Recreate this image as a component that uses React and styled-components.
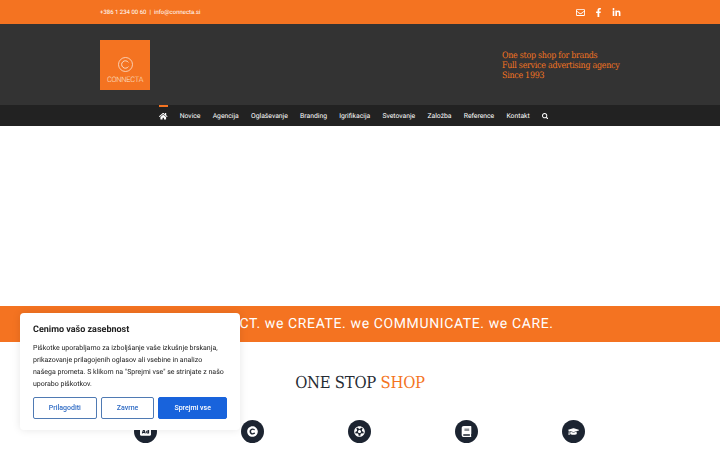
import React from "react";
import styled, { createGlobalStyle } from "styled-components";
import {
  FaHome,
  FaSearch,
  FaFacebookF,
  FaLinkedinIn,
  FaRegEnvelope,
  FaAd,
  FaCopyright,
  FaFutbol,
  FaBook,
  FaGraduationCap,
} from "react-icons/fa";

const GlobalStyle = createGlobalStyle`
  html, body {
    margin: 0;
    padding: 0;
    height: 450px;
    overflow: hidden;
    background: #fff;
    font-family: Roboto, "Liberation Sans", sans-serif;
    text-rendering: geometricPrecision;
  }
`;

const orange = "#f47321";
const slab = `"DejaVu Serif", "Liberation Serif", serif`;

const TopBar = styled.div`
  height: 24px;
  background: ${orange};
  display: flex;
  align-items: center;
  justify-content: space-between;
  padding: 0 95px 0 100px;
  color: #fff;
  font-size: 6px;
`;

const Contact = styled.div`
  display: flex;
  gap: 3px;
`;

const Social = styled.div`
  display: flex;
  align-items: center;
  color: #fff;
`;

const SocialLink = styled.span`
  width: 18px;
  display: flex;
  justify-content: center;
  font-size: 9px;
`;

const Header = styled.header`
  height: 81px;
  background: #333;
  display: flex;
  align-items: center;
  justify-content: space-between;
  padding: 0 100px;
  box-sizing: border-box;
`;

const Logo = styled.div`
  width: 50px;
  height: 50px;
  background: ${orange};
  display: flex;
  flex-direction: column;
  align-items: center;
  padding-top: 17px;
  box-sizing: border-box;
  color: #fbe3d2;
`;

const LogoName = styled.span`
  font-size: 7.5px;
  letter-spacing: -0.3px;
  line-height: 9px;
  margin-top: 3px;
  font-weight: 300;
`;

const Tagline = styled.div`
  width: 118px;
  padding-top: 2px;
  color: ${orange};
  font-family: ${slab};
  font-stretch: condensed;
  font-size: 8.8px;
  letter-spacing: -0.26px;
  line-height: 10px;
  white-space: nowrap;
`;

const Nav = styled.nav`
  height: 21px;
  background: #222;
  display: flex;
  align-items: center;
  padding-left: 159px;
  gap: 12.2px;
  color: #fff;
  font-size: 6.8px;
`;

const NavItem = styled.span`
  height: 100%;
  display: flex;
  align-items: center;
  box-sizing: border-box;
  font-size: ${(props) => props.size || "inherit"};
  border-top: 2px solid ${(props) => (props.active ? orange : "transparent")};
  padding-bottom: 1px;
`;

const Hero = styled.div`
  height: 180px;
  background: #fff;
`;

const Banner = styled.div`
  height: 36px;
  background: ${orange};
  color: #fff;
  display: flex;
  align-items: center;
  justify-content: center;
  font-size: 14px;
  letter-spacing: 0.62px;
`;

const Heading = styled.h2`
  margin: 0;
  padding-top: 30px;
  height: 48px;
  text-align: center;
  font-family: ${slab};
  font-stretch: condensed;
  font-weight: 400;
  font-size: 16.5px;
  letter-spacing: -0.25px;
  line-height: 22px;
  color: #262b33;
`;

const Accent = styled.span`
  color: ${orange};
`;

const Services = styled.div`
  display: grid;
  grid-template-columns: repeat(5, 107px);
  justify-content: center;
  justify-items: center;
  padding-right: 1px;
`;

const ServiceIcon = styled.div`
  width: 23px;
  height: 23px;
  border-radius: 50%;
  background: #1c2431;
  color: #fff;
  display: flex;
  align-items: center;
  justify-content: center;
  font-size: 11px;
`;

const CookieDialog = styled.div`
  position: fixed;
  left: 20px;
  top: 313px;
  width: 220px;
  height: 117px;
  box-sizing: border-box;
  padding: 11px 13px;
  background: #fff;
  border-radius: 4px;
  box-shadow: 0 0 8px rgba(0, 0, 0, 0.1);
`;

const CookieTitle = styled.div`
  font-size: 9px;
  font-weight: 700;
  line-height: 12px;
  color: #212121;
  margin-bottom: 6px;
`;

const CookieText = styled.p`
  margin: 0 0 7px;
  max-width: 192px;
  font-size: 7px;
  line-height: 12px;
  color: #212121;
`;

const CookieActions = styled.div`
  display: flex;
  gap: 4px;
`;

const CookieButton = styled.button`
  width: ${(props) => props.width}px;
  height: 22px;
  padding: 0;
  border-radius: 2px;
  box-sizing: border-box;
  border: 1.5px solid ${(props) => (props.primary ? "#1863dc" : "#4f7ab3")};
  background: ${(props) => (props.primary ? "#1863dc" : "#fff")};
  color: ${(props) => (props.primary ? "#fff" : "#2f6bc4")};
  font-family: inherit;
  font-size: 7px;
  font-weight: 500;
`;

const navLabels = [
  "Novice",
  "Agencija",
  "Oglaševanje",
  "Branding",
  "Igrifikacija",
  "Svetovanje",
  "Založba",
  "Reference",
  "Kontakt",
];

const services = [FaAd, FaCopyright, FaFutbol, FaBook, FaGraduationCap];

function LogoMark() {
  return (
    <svg width="15" height="15" viewBox="0 0 15 15" fill="none" stroke="currentColor">
      <circle cx="7.5" cy="7.5" r="7" strokeWidth="0.8" />
      <path d="M10.4 5.4a3.7 3.7 0 1 0 0 4.2" strokeWidth="0.9" />
    </svg>
  );
}

export default function App() {
  return (
    <>
      <GlobalStyle />
      <TopBar>
        <Contact>
          <span>+386 1 234 00 60</span>
          <span>|</span>
          <span>info@connecta.si</span>
        </Contact>
        <Social>
          <SocialLink>
            <FaRegEnvelope />
          </SocialLink>
          <SocialLink>
            <FaFacebookF />
          </SocialLink>
          <SocialLink>
            <FaLinkedinIn />
          </SocialLink>
        </Social>
      </TopBar>
      <Header>
        <Logo>
          <LogoMark />
          <LogoName>CONNECTA</LogoName>
        </Logo>
        <Tagline>
          One stop shop for brands
          <br />
          Full service advertising agency
          <br />
          Since 1993
        </Tagline>
      </Header>
      <Nav>
        <NavItem active size="8.5px">
          <FaHome />
        </NavItem>
        {navLabels.map((label) => (
          <NavItem key={label}>{label}</NavItem>
        ))}
        <NavItem size="6.5px">
          <FaSearch />
        </NavItem>
      </Nav>
      <Hero />
      <Banner>we CONNECT. we CREATE. we COMMUNICATE. we CARE.</Banner>
      <Heading>
        ONE STOP <Accent>SHOP</Accent>
      </Heading>
      <Services>
        {services.map((Icon, index) => (
          <ServiceIcon key={index}>
            <Icon />
          </ServiceIcon>
        ))}
      </Services>
      <CookieDialog>
        <CookieTitle>Cenimo vašo zasebnost</CookieTitle>
        <CookieText>
          Piškotke uporabljamo za izboljšanje vaše izkušnje brskanja,
          prikazovanje prilagojenih oglasov ali vsebine in analizo našega
          prometa. S klikom na "Sprejmi vse" se strinjate z našo uporabo
          piškotkov.
        </CookieText>
        <CookieActions>
          <CookieButton width={64}>Prilagoditi</CookieButton>
          <CookieButton width={54}>Zavrne</CookieButton>
          <CookieButton width={69} primary>
            Sprejmi vse
          </CookieButton>
        </CookieActions>
      </CookieDialog>
    </>
  );
}
